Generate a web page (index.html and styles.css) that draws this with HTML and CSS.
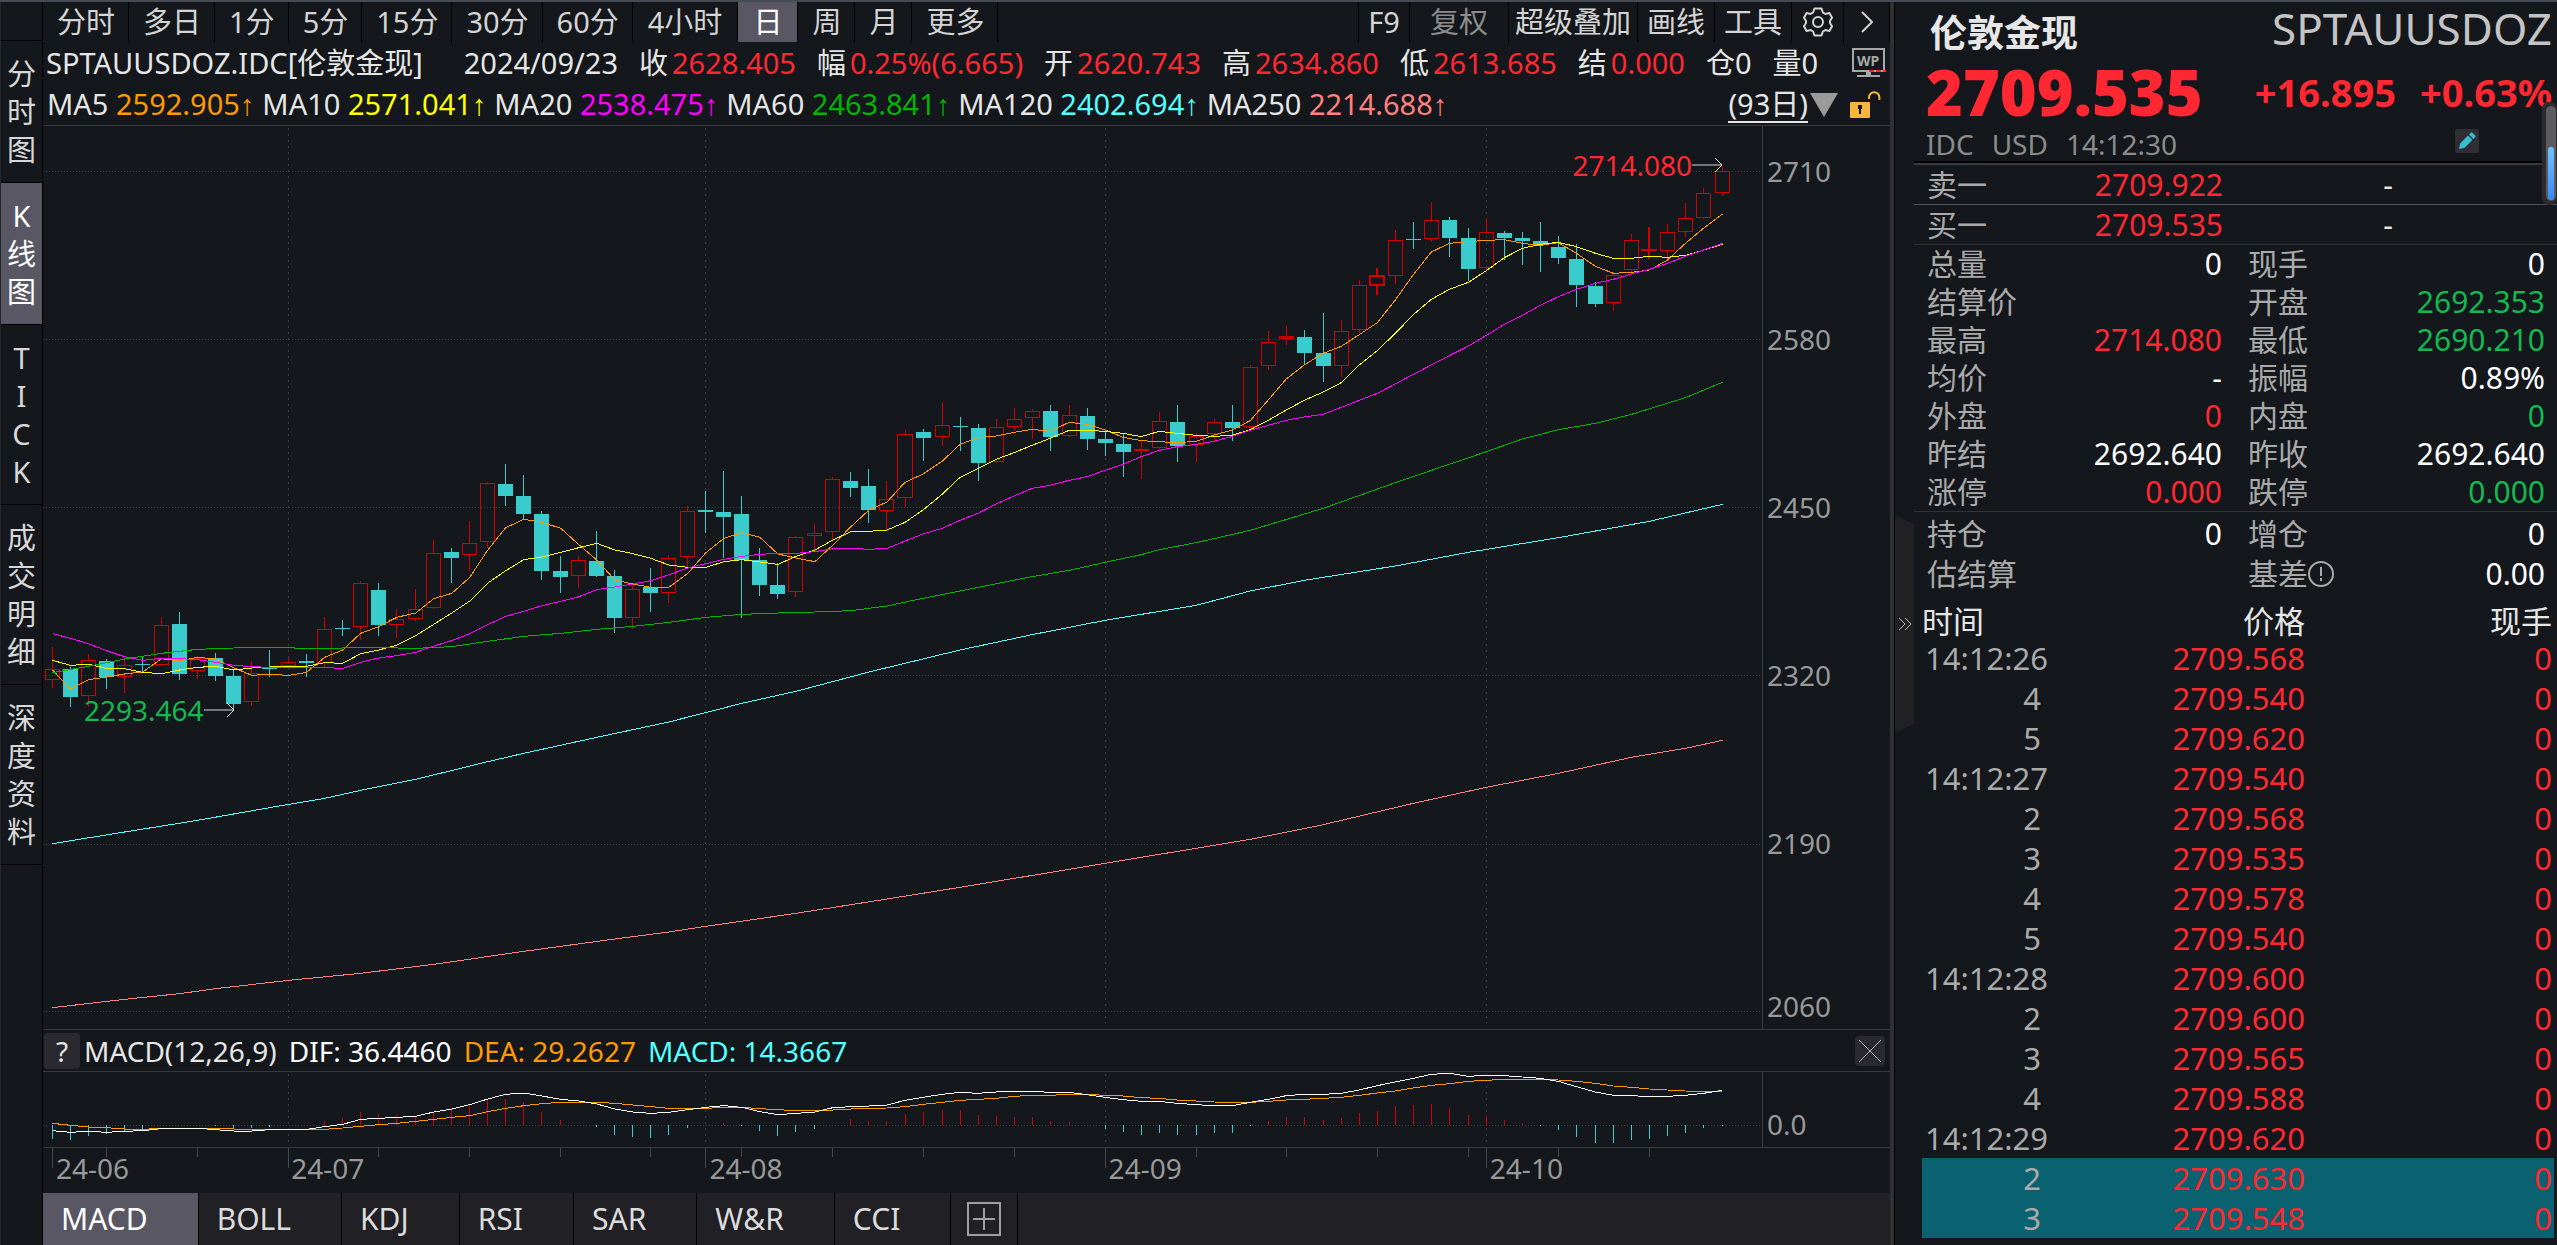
FILE: index.html
```html
<!DOCTYPE html>
<html lang="zh-CN">
<head>
<meta charset="utf-8">
<title>伦敦金现 SPTAUUSDOZ</title>
<link rel="stylesheet" href="styles.css">
</head>
<body>
<div class="terminal">
  <nav class="side">
    <button class="side-tab">分<br>时<br>图</button>
    <button class="side-tab is-active">K<br>线<br>图</button>
    <button class="side-tab">T<br>I<br>C<br>K</button>
    <button class="side-tab">成<br>交<br>明<br>细</button>
    <button class="side-tab">深<br>度<br>资<br>料</button>
  </nav>

  <main class="main">
    <div class="toolbar">
      <button class="tool">分时</button>
      <button class="tool">多日</button>
      <button class="tool">1分</button>
      <button class="tool">5分</button>
      <button class="tool">15分</button>
      <button class="tool">30分</button>
      <button class="tool">60分</button>
      <button class="tool tool-even">4小时</button>
      <button class="tool tool-even is-active">日</button>
      <button class="tool">周</button>
      <button class="tool">月</button>
      <button class="tool">更多</button>
      <span class="spacer"></span>
      <button class="tool tool-right first">F9</button>
      <button class="tool tool-wide is-dim">复权</button>
      <button class="tool tool-tight">超级叠加</button>
      <button class="tool tool-right">画线</button>
      <button class="tool tool-right">工具</button>
      <button class="tool tool-icon" aria-label="设置">
        <svg width="30" height="30" viewBox="0 0 30 30" fill="none" stroke="#d4d4d4" stroke-width="2" stroke-linejoin="round"><path d="M11.500 1.500h7l1.400 4 2.400 1.400 4.100-.8 2.600 4.600-2 3.300v2l2 3.300-2.600 4.600-4.100-.8-2.400 1.400-1.400 4h-7l-1.400-4-2.400-1.400-4.100.8L1 19.300 3 16v-2L1 10.700l2.600-4.600 4.100.8 2.400-1.400z"/><circle cx="15" cy="15" r="5"/></svg>
      </button>
      <button class="tool tool-icon last" aria-label="展开">
        <svg width="14" height="22" viewBox="0 0 14 22" fill="none" stroke="#d4d4d4" stroke-width="2"><path d="M2 1l10 10L2 21"/></svg>
      </button>
    </div>

    <div class="info">
      <span class="symbol">SPTAUUSDOZ.IDC[伦敦金现]</span>
      <span>2024/09/23</span>
      <span>收<b class="up">2628.405</b></span>
      <span>幅<b class="up">0.25%(6.665)</b></span>
      <span>开<b class="up">2620.743</b></span>
      <span>高<b class="up">2634.860</b></span>
      <span>低<b class="up">2613.685</b></span>
      <span>结<b class="up">0.000</b></span>
      <span>仓0</span>
      <span>量0</span>
      <svg class="wp" width="36" height="30" viewBox="0 0 36 30"><rect x="1" y="1" width="31" height="22" fill="none" stroke="#a8a8a8" stroke-width="2"/><path d="M14 24h5v4h-5zM5 27h23v2H5z" fill="#a8a8a8"/><path d="M17 23h17" stroke="#ff2832" stroke-width="2" stroke-dasharray="5 2"/><text x="16" y="18" text-anchor="middle" class="wp-text">WP</text></svg>
    </div>

    <div class="averages">
      <span>MA5 <b class="ma5">2592.905<i>↑</i></b></span>
      <span>MA10 <b class="ma10">2571.041<i>↑</i></b></span>
      <span>MA20 <b class="ma20">2538.475<i>↑</i></b></span>
      <span>MA60 <b class="ma60">2463.841<i>↑</i></b></span>
      <span>MA120 <b class="ma120">2402.694<i>↑</i></b></span>
      <span>MA250 <b class="ma250">2214.688<i>↑</i></b></span>
      <span class="spacer"></span>
      <a class="period" href="#">(93日)</a>
      <svg class="drop" width="28" height="24" viewBox="0 0 28 24"><path d="M0 0h28L14 24z" fill="#9a9a9a"/></svg>
      <svg class="lock" width="32" height="28" viewBox="0 0 32 28"><rect x="0" y="11" width="20" height="16" rx="1" fill="#f4b63f"/><path d="M19 8V6.500a5.200 5.200 0 0 1 10.400 0V9" fill="none" stroke="#f4b63f" stroke-width="2"/><path d="M8 14h4v4h-1v5H9v-5H8z" fill="#14171b"/></svg>
    </div>

    <section class="chart">
      <div class="plot">
        <svg id="candles" viewBox="0 0 1718 2709" preserveAspectRatio="none"></svg>
        <div class="mark mark-high up">2714.080<svg width="31" height="16" viewBox="0 0 31 16"><path d="M0 8h30M23 1l7 7-7 7"/></svg></div>
        <div class="mark mark-low down">2293.464<svg width="31" height="16" viewBox="0 0 31 16"><path d="M0 8h30M23 1l7 7-7 7"/></svg></div>
      </div>
      <div class="scale">
        <span>2710</span><span>2580</span><span>2450</span><span>2320</span><span>2190</span><span class="end">2060</span>
      </div>
    </section>

    <div class="macd-head">
      <button class="help" aria-label="帮助">?</button>
      <span>MACD(12,26,9)</span>
      <span class="dif">DIF: 36.4460</span>
      <span class="dea">DEA: 29.2627</span>
      <span class="macd">MACD: 14.3667</span>
      <span class="spacer"></span>
      <button class="close" aria-label="关闭"><svg width="24" height="24" viewBox="0 0 24 24" stroke="#b4b4b4" fill="none"><path d="M1 1l22 22M23 1L1 23"/></svg></button>
    </div>
    <section class="macd-chart">
      <div class="plot"><svg id="macd" viewBox="0 0 1718 225" preserveAspectRatio="none"></svg></div>
      <div class="scale macd-scale"><span>0.0</span></div>
    </section>

    <div class="dates">
      <div class="dates-plot">
        <svg id="ticks" viewBox="0 0 1718 20" preserveAspectRatio="none"></svg>
        <div class="date-row"><span>24-06</span><span>24-07</span><span>24-08</span><span>24-09</span><span>24-10</span></div>
      </div>
    </div>

    <div class="tabs">
      <button class="tab is-active">MACD</button>
      <button class="tab">BOLL</button>
      <button class="tab">KDJ</button>
      <button class="tab">RSI</button>
      <button class="tab">SAR</button>
      <button class="tab">W&amp;R</button>
      <button class="tab">CCI</button>
      <button class="tab tab-add" aria-label="添加指标"><svg width="34" height="34" viewBox="0 0 34 34" fill="none" stroke="#a0a0a0" stroke-width="2"><rect x="1" y="1" width="32" height="32"/><path d="M17 6v22M6 17h22"/></svg></button>
    </div>
  </main>

  <div class="divider"></div>

  <aside class="quote">
    <button class="fold" aria-label="收起"><svg width="14" height="14" viewBox="0 0 14 14" fill="none" stroke="#b4b4b4"><path d="M1 1l6 6-6 6M7 1l6 6-6 6"/></svg></button>
    <div class="quote-body">
      <header class="head">
        <div class="title"><h1>伦敦金现</h1><span class="code">SPTAUUSDOZ</span></div>
        <div class="price up"><strong>2709.535</strong><span>+16.895</span><span>+0.63%</span></div>
        <div class="meta"><span>IDC</span><span>USD</span><span>14:12:30</span>
          <button class="edit" aria-label="编辑"><svg width="18" height="18" viewBox="0 0 18 18" fill="#35bfd4"><path d="M1 17l1.200-5.600L10 3.600l4.400 4.400-7.800 7.800zM11 2.600l1.800-1.800q.8-.8 1.600 0l2.800 2.800q.8.8 0 1.600L15.400 7z"/></svg></button>
        </div>
      </header>
      <table class="book">
        <tr><th>卖一</th><td class="up">2709.922</td><td class="vol">-</td></tr>
        <tr><th>买一</th><td class="up">2709.535</td><td class="vol">-</td></tr>
      </table>
      <table class="facts">
        <tr><th>总量</th><td>0</td><th>现手</th><td>0</td></tr>
        <tr><th>结算价</th><td></td><th>开盘</th><td class="down">2692.353</td></tr>
        <tr><th>最高</th><td class="up">2714.080</td><th>最低</th><td class="down">2690.210</td></tr>
        <tr><th>均价</th><td>-</td><th>振幅</th><td>0.89%</td></tr>
        <tr><th>外盘</th><td class="up">0</td><th>内盘</th><td class="down">0</td></tr>
        <tr><th>昨结</th><td>2692.640</td><th>昨收</th><td>2692.640</td></tr>
        <tr><th>涨停</th><td class="up">0.000</td><th>跌停</th><td class="down">0.000</td></tr>
      </table>
      <table class="facts facts-tall">
        <tr><th>持仓</th><td>0</td><th>增仓</th><td>0</td></tr>
        <tr><th>估结算</th><td></td><th>基差<svg width="26" height="26" viewBox="0 0 26 26" fill="none" stroke="#aaa" stroke-width="2"><circle cx="13" cy="13" r="12"/><path d="M13 6v9M13 17v3"/></svg></th><td>0.00</td></tr>
      </table>
      <table class="deals">
        <thead><tr><th>时间</th><th>价格</th><th>现手</th></tr></thead>
        <tbody>
          <tr><td>14:12:26</td><td>2709.568</td><td>0</td></tr>
          <tr><td class="n">4</td><td>2709.540</td><td>0</td></tr>
          <tr><td class="n">5</td><td>2709.620</td><td>0</td></tr>
          <tr><td>14:12:27</td><td>2709.540</td><td>0</td></tr>
          <tr><td class="n">2</td><td>2709.568</td><td>0</td></tr>
          <tr><td class="n">3</td><td>2709.535</td><td>0</td></tr>
          <tr><td class="n">4</td><td>2709.578</td><td>0</td></tr>
          <tr><td class="n">5</td><td>2709.540</td><td>0</td></tr>
          <tr><td>14:12:28</td><td>2709.600</td><td>0</td></tr>
          <tr><td class="n">2</td><td>2709.600</td><td>0</td></tr>
          <tr><td class="n">3</td><td>2709.565</td><td>0</td></tr>
          <tr><td class="n">4</td><td>2709.588</td><td>0</td></tr>
          <tr><td>14:12:29</td><td>2709.620</td><td>0</td></tr>
          <tr class="fresh"><td class="n">2</td><td>2709.630</td><td>0</td></tr>
          <tr class="fresh"><td class="n">3</td><td>2709.548</td><td>0</td></tr>
        </tbody>
      </table>
    </div>
    <div class="scrollbar"><div class="thumb"><div class="glow"></div></div></div>
  </aside>
</div>
<script src="chart.js"></script>
</body>
</html>
```
FILE: styles.css
```css
* { box-sizing: border-box; }

body {
  margin: 0;
  background: #14171b;
  color: #e6e6e6;
  font: 29px/40px "Noto Sans", "Noto Sans CJK SC", sans-serif;
}

button {
  margin: 0;
  padding: 0;
  border: 0;
  background: none;
  color: inherit;
  font: inherit;
}

b, i { font-weight: 400; font-style: normal; }
svg { display: block; flex-shrink: 0; }

.up { color: #ff2832; }
.down { color: #14b850; }
.spacer { flex: 1; }

.terminal {
  display: grid;
  grid-template-columns: 43px minmax(0, 1fr) 5px 662px;
  min-height: 100vh;
  border-top: 2px solid #454c55;
}

/* left view switcher */
.side {
  display: flex;
  flex-direction: column;
  padding-top: 38px;
  border-left: 1px solid #22262b;
  border-right: 1px solid #000;
}
.side-tab {
  padding: 14px 0 13px;
  border-top: 1px solid #000;
  line-height: 38px;
  color: #d8d8d8;
}
.side-tab:last-child { border-bottom: 1px solid #000; }
.side-tab.is-active { background: #585763; color: #fff; }

/* chart column */
.main { display: flex; flex-direction: column; min-width: 0; }

.toolbar { display: flex; height: 40px; }
.tool {
  padding: 0 13px 0 14px;
  border-right: 1px solid #000;
  color: #d4d4d4;
  line-height: 38px;
  white-space: nowrap;
}
.tool.is-active { background: #585763; color: #fff; }
.tool.is-dim { color: #8c8c8c; }
.tool-even { padding: 0 15px; }
.tool-right { padding: 0 9px; }
.tool-wide { padding: 0 20px; }
.tool-tight { padding: 0 6px; }
.tool-icon { display: flex; align-items: center; justify-content: center; width: 52px; padding: 0; }
.tool-icon.last { width: 46px; }
.tool.first { border-left: 1px solid #000; }

.info, .averages { display: flex; align-items: center; white-space: nowrap; }
.info { gap: 21px; height: 42px; padding: 0 2px 0 3px; }
.info b { margin-left: 4px; }
.symbol { margin-right: 20px; }
.wp { margin-left: auto; }
.wp-text { font: 700 14px "Noto Sans", sans-serif; fill: #a8a8a8; }
.averages { gap: 8px; height: 42px; padding: 0 8px 0 4px; border-bottom: 1px solid #37393d; }
.averages i { font-family: "Liberation Sans", sans-serif; }
.period { color: inherit; line-height: 34px; text-decoration: none; border-bottom: 2px solid #e6e6e6; }
.drop { margin-left: -6px; }
.lock { margin-left: 4px; }

.ma5, .dea { color: #ff9900; }
.ma10 { color: #ffff00; }
.ma20 { color: #ff00ff; }
.ma60 { color: #00b400; }
.ma120, .macd { color: #54ffff; }
.ma250 { color: #ff8080; }
.dif { color: #fff; }

.chart, .macd-chart { display: flex; border-bottom: 1px solid #37393d; }
.chart { flex: 1; min-height: 400px; }
.plot { position: relative; flex: 1; min-width: 0; }
.plot > svg { position: absolute; width: 100%; height: 100%; }

.scale {
  display: flex;
  flex-direction: column;
  width: 128px;
  padding: 25px 0 0 4px;
  border-left: 1px solid #37393d;
  color: #999;
  font-size: 28px;
}
.scale span { flex: 168 1 0; }
.scale .end { flex: 38 1 0; line-height: 30px; }

.mark {
  position: absolute;
  display: flex;
  align-items: center;
  font-size: 28px;
}
.mark svg { fill: none; stroke: #d8d8d8; }
.mark-high { right: 39px; top: 19px; }
.mark-low { left: 41px; top: 564px; }

.macd-head {
  display: flex;
  align-items: center;
  gap: 12px;
  height: 42px;
  padding: 0 5px 0 1px;
  border-bottom: 1px solid #37393d;
  font-size: 28px;
  white-space: nowrap;
}
.help { width: 36px; height: 36px; margin-right: -8px; border-radius: 4px; background: #2a292f; line-height: 36px; }
.close { display: grid; place-items: center; width: 30px; height: 30px; border-radius: 4px; background: #2a292f; }
.macd-chart { height: 76px; }
.macd-scale { justify-content: center; padding-top: 32px; }

.dates { height: 45px; padding-right: 128px; }
.dates-plot { position: relative; }
.dates-plot svg { position: absolute; width: 100%; height: 20px; }
.date-row {
  display: grid;
  grid-template-columns: 235fr 418fr 399fr 381fr 276fr;
  padding-left: 9px;
  color: #999;
  font-size: 28px;
}
.date-row span { padding-left: 4px; }

.tabs { display: flex; height: 52px; background: #212025; font-size: 30px; }
.tab { padding: 0 50px 0 18px; border-right: 1px solid #000; color: #dcdcdc; }
.tab.is-active { background: #585763; color: #fff; }
.tab-add { padding: 0 16px; }

.divider { background: #2f3034; border-right: 1px solid #000; }

/* quote panel */
.quote { position: relative; display: flex; }
.fold {
  display: grid;
  place-items: center;
  align-self: flex-start;
  width: 19px;
  height: 218px;
  margin-top: 513px;
  background: #212025;
  clip-path: polygon(0 0, 100% 9px, 100% 209px, 0 100%);
}
.quote-body { flex: 1; min-width: 0; }

.head { padding: 0 5px 0 12px; border-bottom: 2px solid #000; }
.title { display: flex; justify-content: space-between; align-items: center; height: 62px; }
h1 { margin: 0 0 0 4px; font-size: 37px; line-height: 60px; }
.code { padding-bottom: 10px; color: #c4c4c4; font-size: 44px; line-height: 50px; }
.price { display: flex; justify-content: space-between; align-items: center; height: 60px; padding-bottom: 4px; font-size: 38px; font-weight: 700; }
.price strong { margin-right: 28px; font-size: 63px; line-height: 56px; }
.meta { display: flex; align-items: flex-end; gap: 18px; height: 37px; color: #8c8c8c; font-size: 28px; line-height: 34px; }
.edit { display: grid; place-items: center; width: 24px; height: 24px; margin: 0 73px 8px auto; border-radius: 2px; background: #2f2e34; }

table { width: 100%; border-spacing: 0; border-collapse: collapse; table-layout: fixed; }
th, td { padding: 0; font-weight: 400; text-align: right; white-space: nowrap; }
th { text-align: left; color: #aaa; }

.book, .facts { font-size: 30px; }
.book { border-top: 2px solid #37393d; line-height: 39px; }
.book tr { border-bottom: 1px solid #505256; }
.book tr:last-child { border-bottom-color: #303236; }
.book th, .facts th { padding-left: 13px; }
.book th { width: 150px; }
.book td:nth-child(2) { width: 159px; }
.book .vol { padding-right: 164px; }

.facts { border-bottom: 1px solid #303236; line-height: 38px; color: #fff; }
.facts th { width: 120px; }
.facts td { width: 188px; }
.facts th:nth-child(3) { width: 146px; padding-left: 26px; }
.facts td:last-child { padding-right: 12px; width: auto; }
.facts th svg { display: inline-block; vertical-align: -2px; }
.facts-tall { margin-top: 2px; border-bottom: 0; line-height: 40px; }

.deals { margin-left: 8px; width: calc(100% - 11px); margin-top: 10px; font-size: 31px; color: #ff2832; }
.deals th { color: #e6e6e6; line-height: 34px; }
.deals th + th { text-align: right; }
.deals th:first-child { width: 128px; }
.deals th:nth-child(2) { width: 255px; }
.deals td { line-height: 40px; }
.deals td:first-child { padding-left: 3px; text-align: left; color: #aaa; }
.deals td.n:first-child { padding-right: 9px; text-align: right; }
.deals td:last-child, .deals th:last-child { padding-right: 2px; }
.fresh { background: #0a6270; }

.scrollbar {
  position: absolute;
  top: 100px;
  right: 0;
  width: 15px;
  height: 103px;
  padding: 4px 1px 4px 4px;
  border-radius: 7px;
  background: #2b2b2d;
}
.thumb { height: 95px; padding: 41px 2px 1px; border-radius: 5px; background: #5c5c60; }
.glow { height: 53px; border-radius: 3px; background: linear-gradient(#72c4ff, #3a86ff); }
```
FILE: chart.js
```js
const NS = 'http://www.w3.org/2000/svg';
const x = i => Math.round(8.7 + 18.14 * i) + 0.5;

function add(parent, name, attrs) {
  const el = document.createElementNS(NS, name);
  for (const key in attrs) el.setAttribute(key, attrs[key]);
  el.setAttribute('vector-effect', 'non-scaling-stroke');
  parent.appendChild(el);
}
const line = (svg, x1, y1, x2, y2, stroke, extra) =>
  add(svg, 'line', { x1, y1, x2, y2, stroke, 'shape-rendering': 'crispEdges', ...extra });

// Sessions in two blocks, each with its own vertical origin.
// Row: kind (R rising, C falling, B bold rising), high, body top, body bottom, low
const EARLY = 822, LATE = 162;
const early = `R 741 808 839 863|C 802 808 890 921|R 762 781 889 920|C 777 784 831 867|R 777 794 830 879
C 771 793 795 815|R 652 674 794 797|C 636 672 822 840|R 768 774 814 836|C 759 774 828 843|C 811 828 912 927
R 783 820 907 917|C 750 803 805 830|R 773 785 797 800|C 762 783 789 830|R 651 688 790 800|C 660 684 686 708
R 544 550 682 719|C 549 570 675 708|R 627 658 676 713|R 568 628 658 662|R 420 460 625 628|C 444 456 474 548
R 363 430 466 513|R 247 250 427 440|C 192 252 288 318|C 225 288 342 360|C 333 342 513 540|C 468 513 531 578
R 468 481 529 563|C 393 483 528 531|C 510 528 654 698|R 548 568 655 686|C 504 562 579 636|R 466 475 580 609
R 318 334 472 505|C 273 330 336 399|C 213 336 351 474|C 288 342 480 654|C 444 480 555 588|C 490 555 582 597
R 408 412 577 590|R 373 398 409 450|R 232 238 397 424|C 216 243 264 291|C 207 258 330 369|R 243 298 332 389
R 90 103 295 321|C 87 96 114 183|R 6 76 112 138`;
const late = `C 711 738 740 812|C 732 744 849 903|R 718 742 847 850|R 685 718 742 754|R 687 694 715 777
C 675 693 771 812|R 676 706 769 772|C 684 708 777 809|C 757 777 789 828|C 759 792 816 890|R 785 808 814 896
R 696 724 805 808|C 675 726 798 846|R 759 768 796 846|R 716 727 763 787|C 675 726 744 783|R 556 562 742 750
R 453 487 559 569|R 438 469 478 495|C 450 471 519 551|C 399 519 558 605|R 420 454 559 590|R 300 316 451 460
B 264 286 316 345|R 150 181 289 312|C 126 177 179 207|R 66 121 178 186|C 111 120 174 231|C 144 174 267 303
R 114 157 265 268|C 153 159 174 240|C 156 174 183 255|C 126 183 192 276|C 168 201 234 252|C 192 237 315 381
C 306 318 372 381|R 276 286 370 392|R 162 181 271 275|B 141 207 212 237|R 132 157 214 240|R 69 115 157 170
R 24 40 115 118|R -38 -26 40 47`;

const parse = (text, origin) => text.split(/[|\n]/).map(row => {
  const [kind, ...v] = row.split(' ');
  return [kind, ...v.map(n => +n + origin)];
});
const sessions = [...parse(early, EARLY), ...parse(late, LATE)];

const candles = document.getElementById('candles');
const GRID = '#3a3d42';
for (const y of [136, 640, 1144, 1648, 2155, 2656]) {
  line(candles, 0, y, 1718, y, GRID, { 'stroke-dasharray': '1 2' });
}
for (const i of [13, 36, 58, 79]) {
  line(candles, x(i), 6, x(i), 2690, GRID, { 'stroke-dasharray': '2 4' });
}

sessions.forEach(([kind, high, top, bottom, low], i) => {
  const cx = x(i);
  if (kind === 'C') {
    line(candles, cx, high, cx, low, '#3acccc');
    add(candles, 'rect', { x: cx - 7.5, y: top, width: 15, height: Math.max(3, bottom - top), fill: '#3acccc', 'shape-rendering': 'crispEdges' });
    return;
  }
  const w = kind === 'B' ? 2 : 1;
  line(candles, cx, high, cx, top, '#d40000', { 'stroke-width': w });
  line(candles, cx, bottom, cx, low, '#d40000', { 'stroke-width': w });
  add(candles, 'rect', { x: cx - 7, y: top + 1.5, width: 14, height: Math.max(1, bottom - top - 3), fill: 'none', stroke: '#d40000', 'stroke-width': w, 'shape-rendering': 'crispEdges' });
});

function curve(svg, color, ...blocks) {
  const points = [];
  for (const [origin, data] of blocks) {
    for (const pair of data.split(' ')) {
      const [i, v] = pair.split(':').map(Number);
      points.push(x(i) + ',' + (v + origin));
    }
  }
  add(svg, 'polyline', { points: points.join(' '), fill: 'none', stroke: color, 'shape-rendering': 'crispEdges' });
}
// Turns a plain list of values into "index:value" pairs.
const list = (start, text) => text.split(' ').map((v, k) => (start + k) + ':' + v).join(' ');

curve(candles, '#ff9900',
  [EARLY, list(0, '810 867 839 831 822 816 776 783 772 777 803 826 823 826 817 772 750 700 680 652 639 596 580 532 450 383 358 367 385 434 480 540 552 562 562 520 458 415 398 412 462 474 485 435 380 330 306 247 222 184')],
  [LATE, list(50, '793 773 768 757 748 754 727 733 750 772 782 785 788 784 765 750 722 660 597 555 520 499 464 428 360 284 216 190 185 181 179 190 196 188 220 259 280 277 270 240 190 145 102')]);
curve(candles, '#ffff00',
  [EARLY, list(0, '781 796 793 805 806 817 821 810 802 799 810 804 801 800 799 788 790 761 750 736 707 673 639 603 549 512 479 471 457 443 430 450 461 475 495 502 502 485 479 486 493 469 450 420 395 394 390 367 330 283')],
  [LATE, list(50, '892 866 838 818 796 775 751 751 754 760 770 754 760 766 769 766 749 721 690 661 636 608 555 512 460 404 358 328 307 272 233 205 193 187 200 220 235 235 229 232 226 211 192')]);
curve(candles, '#ff00ff',
  [EARLY, list(0, '701 715 731 752 770 781 775 776 779 787 796 800 802 802 803 803 805 787 774 767 757 738 722 701 674 649 634 617 604 590 569 561 552 542 524 504 491 478 469 463 460 460 455 446 445 448 445 423 402 385')],
  [LATE, list(50, '1021 1000 972 948 925 916 901 890 871 853 830 811 800 793 784 769 751 736 721 711 703 682 661 640 612 583 555 527 498 466 433 406 376 350 328 310 298 282 268 250 229 210 190')]);
curve(candles, '#00b400',
  [EARLY, '0:818 2:799 4:777 6:760 8:748 10:744 12:742 14:745 18:743 20:745 22:740 24:724 26:709 28:700 30:688 32:679 34:667 36:652 38:643 40:639 42:636 44:632 46:618 48:595'],
  [LATE, '50:1233 54:1190 56:1171 58:1147 60:1124 61:1109 63:1088 66:1051 70:985 74:908 79:815 81:777 83:749 85:730 87:703 90:653 92:607']);
curve(candles, '#54ffff',
  [EARLY, '0:1331 4:1296 8:1261 13:1213 15:1195 17:1171 20:1138 24:1085 26:1060 30:1012 34:966 38:910 41:874 45:816'],
  [LATE, '50:1410 54:1364 58:1321 63:1276 66:1233 69:1201 74:1158 78:1117 83:1073 88:1024 92:973']);
curve(candles, '#ff8080',
  [EARLY, '0:1823 4:1798 7:1781 9:1766 13:1741 17:1720 21:1693 26:1654 31:1617 34:1596 36:1579 41:1540 46:1497'],
  [LATE, '50:2122 58:2050 66:1978 70:1934 75:1870 79:1822 83:1780 87:1732 90:1705 92:1681']);

// MACD pane
const macd = document.getElementById('macd');
const BASE = -156, ZERO = 316 + BASE;
line(macd, 0, ZERO, 1718, ZERO, GRID, { 'stroke-dasharray': '1 2' });
for (const i of [13, 36, 58, 79]) {
  line(macd, x(i), 6, x(i), 218, GRID, { 'stroke-dasharray': '2 4' });
}
const bars = '357 359 348 342 335 327 316 316 316 319 328 323 320 316 316 303 293 277 282 285 288 277 265 255 240 237 246 277 300 316 320 345 350 353 345 323 316 309 318 332 347 335 326 316 297 303 303 282 276 270 270 285 288 291 291 303 306 316 326 335 345 339 345 345 339 339 318 303 291 291 300 294 279 273 258 255 252 264 285 288 300 309 317 329 350 368 368 360 356 348 338 323 317';
bars.split(' ').forEach((v, i) => {
  if (v !== '316') line(macd, x(i), ZERO, x(i), +v + BASE, v < 316 ? '#d40000' : '#3acccc');
});
curve(macd, '#ff9900', [BASE, '0:310 1:316 2:321 3:323 4:327 5:328 6:325 8:325 10:327 12:330 13:328 15:328 16:324 17:319 18:314 19:310 20:304 21:298 22:292 23:287 24:275 25:265 26:257 27:251 28:247 30:247 31:250 32:255 33:260 34:265 36:265 37:262 38:262 39:266 40:269 41:272 42:273 43:270 44:267 46:264 47:260 48:253 49:247 50:241 51:238 52:235 53:229 54:226 55:226 56:223 57:223 58:226 59:228 60:233 61:235 62:240 63:243 64:246 65:247 66:247 67:244 68:240 69:238 70:235 71:232 72:226 73:219 74:213 75:204 76:196 77:191 78:184 79:181 80:178 82:178 83:180 84:184 85:190 86:198 87:202 88:207 89:210 90:213 91:216 92:214']);
curve(macd, '#ffffff', [BASE, '0:332 1:337 2:334 3:337 4:334 5:332 6:326 8:325 9:329 10:333 11:333 12:329 14:328 15:320 16:313 17:298 18:295 20:289 21:276 22:267 23:254 24:237 25:223 26:219 27:228 28:238 29:243 30:252 31:267 32:276 33:280 34:277 35:269 36:262 37:257 38:262 39:275 40:284 41:280 42:276 43:263 44:260 45:258 46:255 47:241 48:232 49:223 50:217 51:220 52:216 53:214 54:214 55:217 56:217 57:224 58:232 59:239 60:244 61:244 62:250 63:254 64:257 65:257 66:247 67:238 68:227 69:223 70:223 71:220 72:210 73:197 74:186 75:175 76:163 77:160 78:169 79:166 80:167 81:171 82:175 83:184 84:200 85:216 86:226 88:229 89:229 90:226 91:220 92:211']);

// Date axis: a short tick every five sessions, a long one at each month
const ticks = document.getElementById('ticks');
for (let i = 3; i < 92; i += 5) line(ticks, x(i), 0, x(i), 9, '#45484d');
for (const i of [0, 13, 36, 58, 79]) line(ticks, x(i), 0, x(i), 20, '#45484d');
```
